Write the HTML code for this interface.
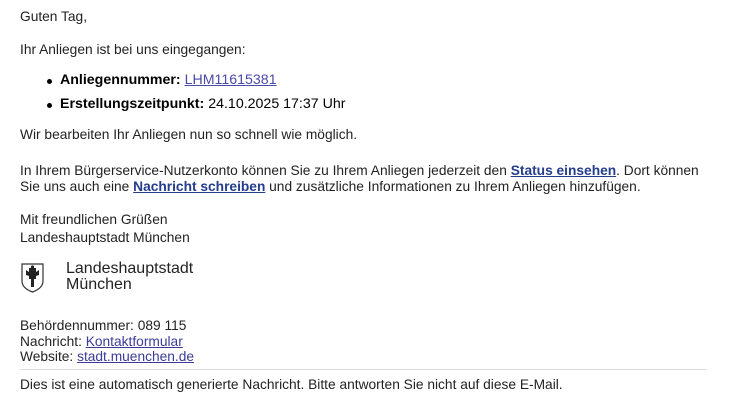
<!DOCTYPE html>
<html><head><meta charset="utf-8"><style>
body{margin:0;background:#fff;color:#222;font-family:"Liberation Sans",sans-serif;font-size:13.75px;width:736px;height:406px;overflow:hidden}
.p{position:absolute;left:20px;white-space:nowrap}
a{color:#3b3b99}
a.b{color:#233c8c;font-weight:bold}
.li{position:absolute;left:60px;font-size:14.2px;color:#000;white-space:nowrap}
.li:before{content:"";position:absolute;left:-13px;top:7px;width:5px;height:5px;border-radius:50%;background:#000}
a.l{color:#4a4aa8}
</style></head><body>
<div class="p" style="top:9px">Guten Tag,</div>
<div class="p" style="top:42px">Ihr Anliegen ist bei uns eingegangen:</div>
<div class="li" style="top:72px"><b>Anliegennummer:</b> <a class="l" href="#">LHM11615381</a></div>
<div class="li" style="top:96px"><b>Erstellungszeitpunkt:</b> 24.10.2025 17:37 Uhr</div>
<div class="p" style="top:127px">Wir bearbeiten Ihr Anliegen nun so schnell wie möglich.</div>
<div class="p" style="top:163px">In Ihrem Bürgerservice-Nutzerkonto können Sie zu Ihrem Anliegen jederzeit den <a class="b" href="#">Status einsehen</a>. Dort können</div>
<div class="p" style="top:179px">Sie uns auch eine <a class="b" href="#">Nachricht schreiben</a> und zusätzliche Informationen zu Ihrem Anliegen hinzufügen.</div>
<div class="p" style="top:212px">Mit freundlichen Grüßen</div>
<div class="p" style="top:230px">Landeshauptstadt München</div>
<svg style="position:absolute;left:20px;top:262px" width="25" height="31" viewBox="0 0 25 31"><path d="M2 2H23V19C23 25 18 28 12.5 30C7 28 2 25 2 19Z" fill="#fff" stroke="#333" stroke-width="1.2"/><path d="M9 6h7v4l3-2v5l-3 1v3h-2v8h-3v-8H9v-3l-3-1V8l3 2z" fill="#222"/><circle cx="12.5" cy="5" r="1.6" fill="#222"/></svg>
<div class="p" style="left:66px;top:261px;font-size:16px;line-height:16px;color:#222">Landeshauptstadt<br>München</div>
<div class="p" style="top:318px">Behördennummer: 089 115</div>
<div class="p" style="top:334px">Nachricht: <a href="#">Kontaktformular</a></div>
<div class="p" style="top:349px">Website: <a href="#">stadt.muenchen.de</a></div>
<div style="position:absolute;left:20px;top:369px;width:687px;height:1px;background:#ddd"></div>
<div class="p" style="top:377px">Dies ist eine automatisch generierte Nachricht. Bitte antworten Sie nicht auf diese E-Mail.</div>
</body></html>
